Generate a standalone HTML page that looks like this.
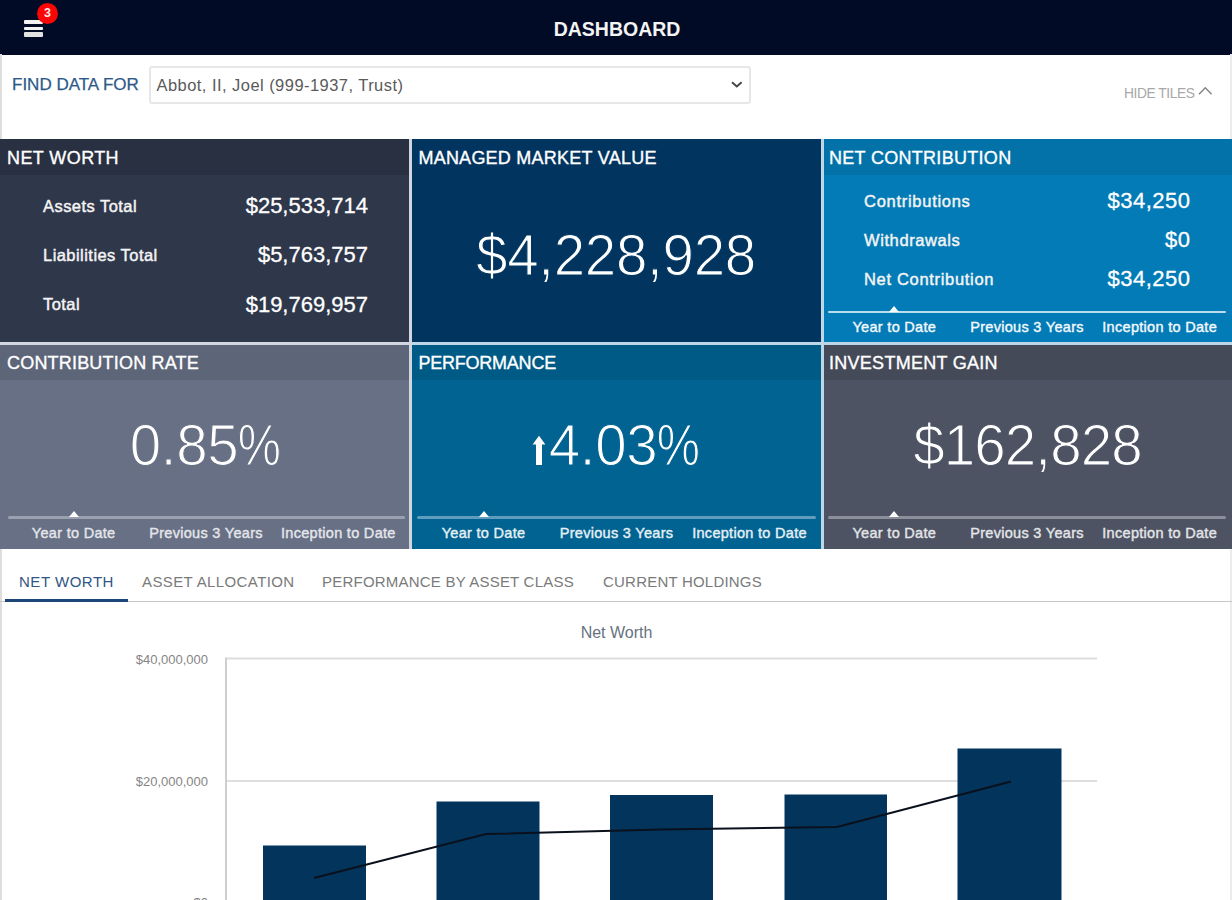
<!DOCTYPE html>
<html lang="en">
<head>
<meta charset="utf-8">
<title>Dashboard</title>
<style>
*{box-sizing:border-box;margin:0;padding:0}
html,body{width:1232px;height:900px;overflow:hidden;background:#fff;font-family:"Liberation Sans",sans-serif}
.a{position:absolute;white-space:nowrap}
#app{position:relative;width:1232px;height:900px;overflow:hidden;background:#fff}
#topbar{left:0;top:0;width:1232px;height:54.5px;background:#020b25}
#title{left:617px;transform:translateX(-50%);color:#f4f4f4;font-weight:bold;font-size:19.5px;line-height:24px;top:16.5px}
.hb{left:24px;width:19px;height:4px;background:#f2f2f2;border-radius:1px}
#badge{left:36.6px;top:2.5px;width:21.8px;height:21.8px;border-radius:11px;background:#fa0606;color:#ffe9e9;font-size:12.5px;font-weight:bold;text-align:center;line-height:21px}
#findlbl{left:12px;top:74.5px;font-size:17px;-webkit-text-stroke:0.25px #2d5a88;color:#2d5a88;line-height:20px}
#select{left:149px;top:66px;width:602px;height:38px;border:2px solid #e7e7e7;background:#fff;border-radius:3px}
#seltxt{left:156.5px;top:75px;font-size:16.5px;letter-spacing:0.45px;color:#5a5a5a;line-height:20px}
#hide{left:1124px;top:85.5px;font-size:13.8px;letter-spacing:-0.45px;color:#a8a8a8;line-height:16px}
.ttl{font-size:18px;color:#fff;line-height:20px;-webkit-text-stroke:0.35px #fff}
.lbl{font-size:16.5px;-webkit-text-stroke:0.45px #f4f4f4;letter-spacing:0.45px;color:#f4f4f4;line-height:20px}
.val{font-size:22px;color:#fff;-webkit-text-stroke:0.3px #fff;line-height:26px;transform:translateX(-100%)}
.big{text-align:center;color:#fff;font-size:56.5px;letter-spacing:-0.3px;line-height:60px;transform:translateX(-50%)}
.pc{display:inline-block;transform:scaleX(0.86);transform-origin:0 50%;margin-right:-7px;margin-left:-1px}
.sl{height:3px;border-radius:2px}
.tri{width:0;height:0;border-left:5px solid transparent;border-right:5px solid transparent;border-bottom:6px solid #fff;transform:translateX(-5px)}
.per{font-size:14.5px;letter-spacing:0.3px;-webkit-text-stroke:0.4px;color:#f0f0f0;transform:translateX(-50%);line-height:16px}
.tab{font-size:15px;letter-spacing:0.5px;color:#7a7a7a;line-height:18px}
.ax{font-size:13px;color:#858585;line-height:14px;transform:translateX(-100%)}
</style>
</head>
<body>
<div id="app">
<div id="topbar" class="a"></div>
<div id="title" class="a">DASHBOARD</div>
<div class="a hb" style="top:20px;height:4.4px"></div>
<div class="a hb" style="top:26.6px;height:3.5px"></div>
<div class="a hb" style="top:32.2px;height:4.4px;background:#e2e2e2"></div>
<div id="badge" class="a">3</div>
<div class="a" style="left:0;top:54px;width:2.2px;height:86px;background:#dedede"></div>
<div class="a" style="left:0;top:548px;width:2.2px;height:352px;background:#dedede"></div>
<div class="a" style="left:1230px;top:54px;width:2px;height:846px;background:#ececec"></div>
<div id="findlbl" class="a">FIND DATA FOR</div>
<div id="select" class="a"></div>
<div id="seltxt" class="a">Abbot, II, Joel (999-1937, Trust)</div>
<svg class="a" style="left:729px;top:78px" width="16" height="12" viewBox="0 0 16 12"><path d="M3 4.2 L7.8 8.4 L12.6 4.2" fill="none" stroke="#444" stroke-width="1.9"/></svg>
<div id="hide" class="a">HIDE TILES</div>
<svg class="a" style="left:1196px;top:83px" width="20" height="16" viewBox="0 0 20 16"><path d="M3 11.2 L9.3 4.8 L15.6 11.2" fill="none" stroke="#888" stroke-width="1.6"/></svg>
<div class="a" style="left:0;top:139px;width:1232px;height:409.5px;background:#d2d6e0"></div>
<div class="a" style="left:412px;top:139px;width:820px;height:409.5px;background:#bdd6e8"></div>

<div class="a" id="t1" style="left:0px;top:139px;width:409px;height:203px;background:#2f374b"></div>
<div class="a" style="left:0px;top:139px;width:409px;height:36px;background:#293042"></div>
<div class="a ttl" id="t1t" style="left:7px;top:148px;letter-spacing:0.41px">NET WORTH</div>
<div class="a" id="t2" style="left:412px;top:139px;width:409px;height:203px;background:#01355f"></div>
<div class="a ttl" id="t2t" style="left:418.4px;top:148px;letter-spacing:0.245px">MANAGED MARKET VALUE</div>
<div class="a" id="t3" style="left:824px;top:139px;width:408px;height:203px;background:#027bb6"></div>
<div class="a" style="left:824px;top:139px;width:408px;height:36px;background:#0272a8"></div>
<div class="a ttl" id="t3t" style="left:829px;top:148px;letter-spacing:0.3px">NET CONTRIBUTION</div>
<div class="a" id="t4" style="left:0px;top:345px;width:409px;height:203.5px;background:#687085"></div>
<div class="a" style="left:0px;top:345px;width:409px;height:35px;background:#5d6579"></div>
<div class="a ttl" id="t4t" style="left:7px;top:353px;letter-spacing:0.196px">CONTRIBUTION RATE</div>
<div class="a" id="t5" style="left:412px;top:345px;width:409px;height:203.5px;background:#006392"></div>
<div class="a" style="left:412px;top:345px;width:409px;height:35px;background:#005a86"></div>
<div class="a ttl" id="t5t" style="left:418.6px;top:353px;letter-spacing:-0.247px">PERFORMANCE</div>
<div class="a" id="t6" style="left:824px;top:345px;width:408px;height:203.5px;background:#4d5363"></div>
<div class="a" style="left:824px;top:345px;width:408px;height:35px;background:#454a59"></div>
<div class="a ttl" id="t6t" style="left:829px;top:353px;letter-spacing:0.273px">INVESTMENT GAIN</div>
<div class="a lbl" id="nwl0" style="left:43px;top:195.5px">Assets Total</div>
<div class="a val" id="nwv0" style="left:368px;top:193px">$25,533,714</div>
<div class="a lbl" id="nwl1" style="left:43px;top:244.5px">Liabilities Total</div>
<div class="a val" id="nwv1" style="left:368px;top:242px">$5,763,757</div>
<div class="a lbl" id="nwl2" style="left:43px;top:294.0px">Total</div>
<div class="a val" id="nwv2" style="left:368px;top:291.5px">$19,769,957</div>
<div class="a lbl" id="ncl0" style="left:864px;top:190.5px;letter-spacing:0.72px">Contributions</div>
<div class="a val" id="ncv0" style="left:1190.5px;top:188px;letter-spacing:0.5px">$34,250</div>
<div class="a lbl" id="ncl1" style="left:864px;top:229.5px;letter-spacing:0.6px">Withdrawals</div>
<div class="a val" id="ncv1" style="left:1190.5px;top:227px;letter-spacing:0.5px">$0</div>
<div class="a lbl" id="ncl2" style="left:864px;top:268.5px;letter-spacing:0.68px">Net Contribution</div>
<div class="a val" id="ncv2" style="left:1190.5px;top:266px;letter-spacing:0.5px">$34,250</div>
<div class="a big" id="b2" style="left:616px;top:225.5px;-webkit-text-stroke:1.2px #01355f">$4,228,928</div>
<div class="a big" id="b4" style="left:205px;top:415.5px;-webkit-text-stroke:1.2px #687085">0.85<span class="pc">%</span></div>
<div class="a big" id="b5" style="left:624px;top:415.5px;-webkit-text-stroke:1.2px #006392">4.03<span class="pc">%</span></div>
<svg class="a" style="left:530px;top:434px" width="18" height="33" viewBox="0 0 18 33"><path d="M9 1.8 L15.4 10.4 L12 10.4 L12 31 L6 31 L6 10.4 L2.6 10.4 Z" fill="#fff"/></svg>
<div class="a big" id="b6" style="left:1027.5px;top:415.5px;letter-spacing:-0.9px;-webkit-text-stroke:1.2px #4d5363">$162,828</div>
<div class="a sl" style="left:828px;top:310.5px;width:398px;height:2px;background:#b9dcef"></div>
<div class="a tri" style="left:894.3333333333334px;top:305.9px"></div>
<div class="a per" style="left:894.3333333333334px;top:318.9px;color:#f2f8fc">Year to Date</div>
<div class="a per" style="left:1027.0px;top:318.9px;color:#f2f8fc">Previous 3 Years</div>
<div class="a per" style="left:1159.6666666666665px;top:318.9px;color:#f2f8fc">Inception to Date</div>
<div class="a sl" style="left:7.5px;top:516px;width:397.0px;height:3px;background:#9aa0af"></div>
<div class="a tri" style="left:73.66666666666667px;top:511.4px"></div>
<div class="a per" style="left:73.66666666666667px;top:524.9px;color:#e4e6ea">Year to Date</div>
<div class="a per" style="left:206.0px;top:524.9px;color:#e4e6ea">Previous 3 Years</div>
<div class="a per" style="left:338.33333333333337px;top:524.9px;color:#e4e6ea">Inception to Date</div>
<div class="a sl" style="left:417px;top:516px;width:399px;height:3px;background:#5f9cbd"></div>
<div class="a tri" style="left:483.5px;top:511.4px"></div>
<div class="a per" style="left:483.5px;top:524.9px;color:#e6f0f5">Year to Date</div>
<div class="a per" style="left:616.5px;top:524.9px;color:#e6f0f5">Previous 3 Years</div>
<div class="a per" style="left:749.5px;top:524.9px;color:#e6f0f5">Inception to Date</div>
<div class="a sl" style="left:828px;top:516px;width:398px;height:3px;background:#8a8f9b"></div>
<div class="a tri" style="left:894.3333333333334px;top:511.4px"></div>
<div class="a per" style="left:894.3333333333334px;top:524.9px;color:#e4e5e8">Year to Date</div>
<div class="a per" style="left:1027.0px;top:524.9px;color:#e4e5e8">Previous 3 Years</div>
<div class="a per" style="left:1159.6666666666665px;top:524.9px;color:#e4e5e8">Inception to Date</div>
<div class="a" style="left:0;top:600.7px;width:1232px;height:1.6px;background:#c6c6c6"></div>
<div class="a" style="left:5px;top:599px;width:123px;height:3px;background:#1b4677"></div>
<div class="a tab" id="tab1" style="left:19px;top:573px;color:#2f5684;letter-spacing:0.52px">NET WORTH</div>
<div class="a tab" id="tab2" style="left:142px;top:573px;letter-spacing:0.4px">ASSET ALLOCATION</div>
<div class="a tab" id="tab3" style="left:322px;top:573px;letter-spacing:0.22px">PERFORMANCE BY ASSET CLASS</div>
<div class="a tab" id="tab4" style="left:603px;top:573px;letter-spacing:0.21px">CURRENT HOLDINGS</div>
<div class="a" id="ctitle" style="left:616.5px;top:622.5px;transform:translateX(-50%);font-size:16px;color:#65737f;line-height:20px">Net Worth</div>
<div class="a ax" id="ax40" style="left:208px;top:653px">$40,000,000</div>
<div class="a ax" id="ax20" style="left:208px;top:775px">$20,000,000</div>
<div class="a ax" id="ax0" style="left:208px;top:896px">$0</div>
<svg class="a" style="left:0;top:640px" width="1232" height="260" viewBox="0 640 1232 260">
<line x1="226" y1="658.5" x2="1097" y2="658.5" stroke="#dedede" stroke-width="1.8"/>
<line x1="226" y1="781" x2="1097" y2="781" stroke="#dedede" stroke-width="1.8"/>
<line x1="226" y1="657.6" x2="226" y2="900" stroke="#cfcfcf" stroke-width="2"/>
<g fill="#03355c">
<rect x="263" y="845.5" width="103" height="60"/>
<rect x="436.5" y="801.5" width="103" height="100"/>
<rect x="610" y="795" width="103" height="110"/>
<rect x="784.5" y="794.5" width="102.5" height="110"/>
<rect x="957.5" y="748.5" width="104" height="160"/>
</g>
<polyline points="314,878 486,834 661,829.5 837,827 1011,781.5" fill="none" stroke="#0a101c" stroke-width="2"/>
</svg>
</div>
</body>
</html>
